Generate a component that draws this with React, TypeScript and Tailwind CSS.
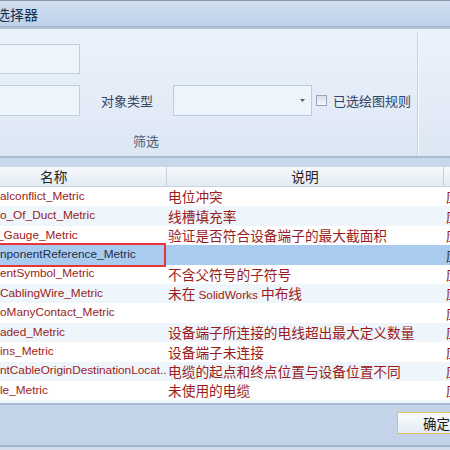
const rows = [
  { name: "alconflict_Metric", desc: "电位冲突" },
  { name: "o_Of_Duct_Metric", desc: "线槽填充率" },
  { name: "_Gauge_Metric", desc: "验证是否符合设备端子的最大截面积", shift: true },
  { name: "nponentReference_Metric", desc: "", selected: true },
  { name: "entSymbol_Metric", desc: "不含父符号的子符号" },
  { name: "CablingWire_Metric", desc: "未在 ", latin: "SolidWorks", tail: " 中布线" },
  { name: "oManyContact_Metric", desc: "" },
  { name: "aded_Metric", desc: "设备端子所连接的电线超出最大定义数量" },
  { name: "ins_Metric", desc: "设备端子未连接" },
  { name: "ntCableOriginDestinationLocat...", desc: "电缆的起点和终点位置与设备位置不同" },
  { name: "le_Metric", desc: "未使用的电缆" },
  { name: "", desc: "未使用的电线" },
];

export default function App() {
  return (
    <div className="w-[450px] h-[450px] overflow-hidden flex flex-col bg-[#c5d5e9] font-['Noto_Sans_CJK_SC',sans-serif]">
      {/* title bar */}
      <div className="h-[26px] shrink-0 overflow-hidden border-t border-[#8e99a8] bg-linear-to-b from-[#d0dff1] to-[#bfd2ea] flex items-center">
        <span className="-ml-[32px] whitespace-nowrap text-[14px] leading-none text-[#16304f]">规则选择器</span>
      </div>
      <div className="h-[3px] shrink-0 bg-linear-to-b from-[#9fb2c9] to-[#b9cbe0]" />

      {/* ribbon */}
      <div className="h-[127px] shrink-0 flex bg-linear-to-b from-[#ebf2fb] to-[#dde7f4]">
        <div className="w-[417px] shrink-0 flex flex-col pt-[15px]">
          <div className="-ml-[2px] w-[82px] h-[30px] border border-[#c0d0e3] bg-[#eef4fc]" />
          <div className="mt-[11px] flex items-center">
            <div className="-ml-[2px] w-[82px] h-[31px] border border-[#c0d0e3] bg-[#eef4fc]" />
            <span className="ml-[21px] text-[13px] text-[#34455f]">对象类型</span>
            <div className="ml-[20px] w-[139px] h-[31px] border border-[#b9cbe0] bg-[#eef4fc] flex items-center justify-end pr-[6px]">
              <svg width="5" height="3" viewBox="0 0 5 3">
                <path d="M0 0h5L2.5 3z" fill="#5a5f66" />
              </svg>
            </div>
            <div className="ml-[4px] w-[11px] h-[11px] border border-[#95a4b8] bg-linear-to-b from-[#d9dfe7] to-[#f6f8fb]" />
            <span className="ml-[6px] text-[13px] text-[#2f4468]">已选绘图规则</span>
          </div>
          <div className="mt-[17px] pl-[133px] text-[13px] leading-[16px] text-[#4a5d79]">筛选</div>
        </div>
        <div className="mt-[3px] w-[2px] shrink-0 border-l border-[#c6d3e3] bg-[#f3f7fc]" />
        <div className="flex-1" />
      </div>
      <div className="h-[2px] shrink-0 bg-[#a8bbd2]" />
      <div className="h-[9px] shrink-0 bg-[#c8d7ea]" />

      {/* grid */}
      <div className="relative h-[236px] shrink-0 overflow-hidden bg-white">
        <div className="h-[20px] flex bg-linear-to-b from-[#f7f9fc] to-[#e3eaf3] border-b border-[#c9d5e3] text-[13.7px] leading-[19px] text-[#222]">
          <div className="w-[167px] shrink-0 border-r border-[#c5d1e0] pl-[40px]">名称</div>
          <div className="w-[277px] shrink-0 border-r border-[#c5d1e0] text-center">说明</div>
          <div className="flex-1" />
        </div>
        {rows.map((r, i) => (
          <div
            key={i}
            className={`h-[19.4px] flex items-center whitespace-nowrap ${
              r.selected ? "bg-[#a9cbef] text-[#1e2d4a]" : i % 2 ? "bg-[#eef5fb] text-[#9a1c20]" : "bg-white text-[#9a1c20]"
            }`}
          >
            <div className="w-[167px] shrink-0 overflow-hidden font-['Liberation_Sans',sans-serif] text-[11.8px]">
              <span className={r.shift ? "-ml-[3px]" : ""}>{r.name}</span>
            </div>
            <div className="w-[277px] shrink-0 overflow-hidden pl-[1px] text-[13.7px]">
              {r.desc}
              {r.latin && (
                <span className="font-['Liberation_Sans',sans-serif] text-[11.8px]">{r.latin}</span>
              )}
              {r.tail}
            </div>
            <div className={`flex-1 overflow-hidden pl-[2px] text-[13.7px] ${r.selected ? "text-[#333]" : ""}`}>应用</div>
          </div>
        ))}
        <div className="absolute left-[-4px] top-[76px] w-[170px] h-[24px] border-2 border-[#e8353a]" />
      </div>
      <div className="h-[2px] shrink-0 bg-[#aabcd2]" />

      {/* bottom */}
      <div className="h-[40px] shrink-0 pl-[397px] pt-[7px] bg-[#c4d4e8]">
        <div className="w-[79px] h-[22px] border border-[#e2c05e] bg-linear-to-b from-[#fbfcfe] to-[#e4ebf4] flex items-center justify-center text-[13.5px] text-[#1a1a1a]">
          确定
        </div>
      </div>
      <div className="h-[2px] shrink-0 bg-[#a3b6cd]" />
      <div className="flex-1 bg-[#d2ddeb]" />
    </div>
  );
}
